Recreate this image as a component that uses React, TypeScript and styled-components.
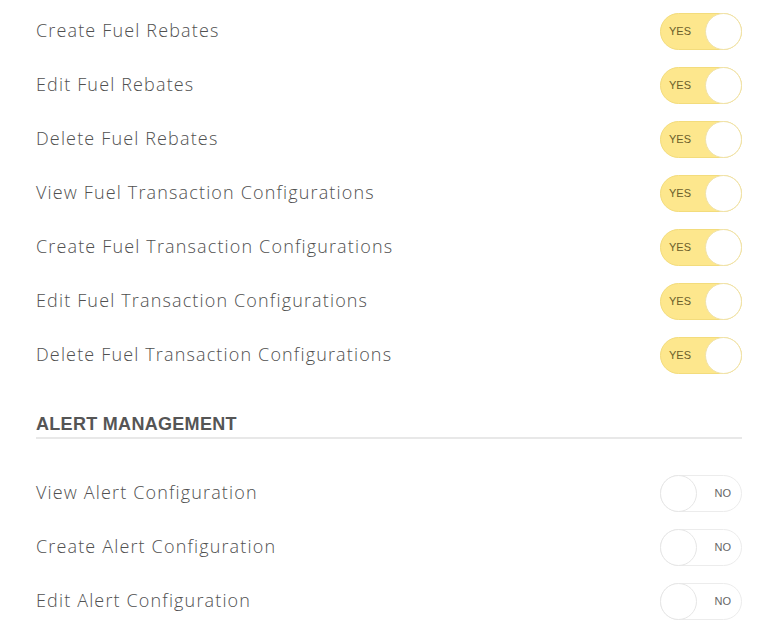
import React, { FC, useState } from 'react';
import styled, { createGlobalStyle } from 'styled-components';

const GlobalStyle = createGlobalStyle`
  html, body {
    margin: 0;
    padding: 0;
    background: #fff;
  }
  body {
    font-family: "Open Sans", "Noto Sans", sans-serif;
  }
`;

interface IPermission {
  label: string;
  enabled: boolean;
}

const fuelPermissions: IPermission[] = [
  { label: 'Create Fuel Rebates', enabled: true },
  { label: 'Edit Fuel Rebates', enabled: true },
  { label: 'Delete Fuel Rebates', enabled: true },
  { label: 'View Fuel Transaction Configurations', enabled: true },
  { label: 'Create Fuel Transaction Configurations', enabled: true },
  { label: 'Edit Fuel Transaction Configurations', enabled: true },
  { label: 'Delete Fuel Transaction Configurations', enabled: true },
];

const alertPermissions: IPermission[] = [
  { label: 'View Alert Configuration', enabled: false },
  { label: 'Create Alert Configuration', enabled: false },
  { label: 'Edit Alert Configuration', enabled: false },
];

interface IToggleProps {
  on: boolean;
  onClick?(): void;
}

const Toggle: FC<IToggleProps> = ({ on, onClick }) => (
  <Switch $on={on} onClick={onClick}>
    <SwitchText $on={on}>{on ? 'YES' : 'NO'}</SwitchText>
    <Knob $on={on} />
  </Switch>
);

const PermissionRow: FC<{ item: IPermission }> = ({ item }) => {
  const [on, setOn] = useState(item.enabled);
  return (
    <Row>
      <Label>{item.label}</Label>
      <Toggle on={on} onClick={() => setOn(!on)} />
    </Row>
  );
};

export default function App() {
  return (
    <>
      <GlobalStyle />
      <Root>
        <List>
          {fuelPermissions.map((p) => (
            <PermissionRow key={p.label} item={p} />
          ))}
        </List>
        <SectionTitle>ALERT MANAGEMENT</SectionTitle>
        <List>
          {alertPermissions.map((p) => (
            <PermissionRow key={p.label} item={p} />
          ))}
        </List>
      </Root>
    </>
  );
}

const Root = styled.div`
  width: 706px;
  padding: 4px 0 0 36px;
  display: flex;
  flex-direction: column;
`;

const List = styled.div`
  display: flex;
  flex-direction: column;
`;

const Row = styled.div`
  height: 54px;
  display: flex;
  align-items: center;
  justify-content: space-between;
`;

const Label = styled.div`
  font-size: 18px;
  line-height: 24px;
  font-weight: 300;
  color: #505050;
  letter-spacing: 1.15px;
  margin-bottom: 3px;
`;

const SectionTitle = styled.div`
  margin-top: 32px;
  margin-bottom: 27px;
  padding-bottom: 3px;
  line-height: 20px;
  border-bottom: 2px solid #e8e8e8;
  font-family: "Liberation Sans", Arial, sans-serif;
  font-weight: 700;
  font-size: 18px;
  letter-spacing: 0.3px;
  color: #555;
`;

const Switch = styled.div<{ $on: boolean }>`
  position: relative;
  width: 82px;
  height: 37px;
  box-sizing: border-box;
  border-radius: 19px;
  border: 1px solid ${(p) => (p.$on ? '#f3dc7c' : '#ececec')};
  background: ${(p) => (p.$on ? '#fde78d' : '#fff')};
  display: flex;
  align-items: center;
  justify-content: ${(p) => (p.$on ? 'flex-start' : 'flex-end')};
  cursor: pointer;
`;

const SwitchText = styled.span<{ $on: boolean }>`
  font-family: "Liberation Sans", Arial, sans-serif;
  font-size: 11px;
  color: ${(p) => (p.$on ? '#6b5e2a' : '#666')};
  padding: ${(p) => (p.$on ? '0 0 0 8px' : '0 10px 0 0')};
`;

const Knob = styled.div<{ $on: boolean }>`
  position: absolute;
  top: -1px;
  ${(p) => (p.$on ? 'right: -1px;' : 'left: -1px;')}
  width: 37px;
  height: 37px;
  box-sizing: border-box;
  border-radius: 50%;
  background: #fff;
  border: 1px solid ${(p) => (p.$on ? '#f0e2a8' : '#e6e6e6')};
`;
